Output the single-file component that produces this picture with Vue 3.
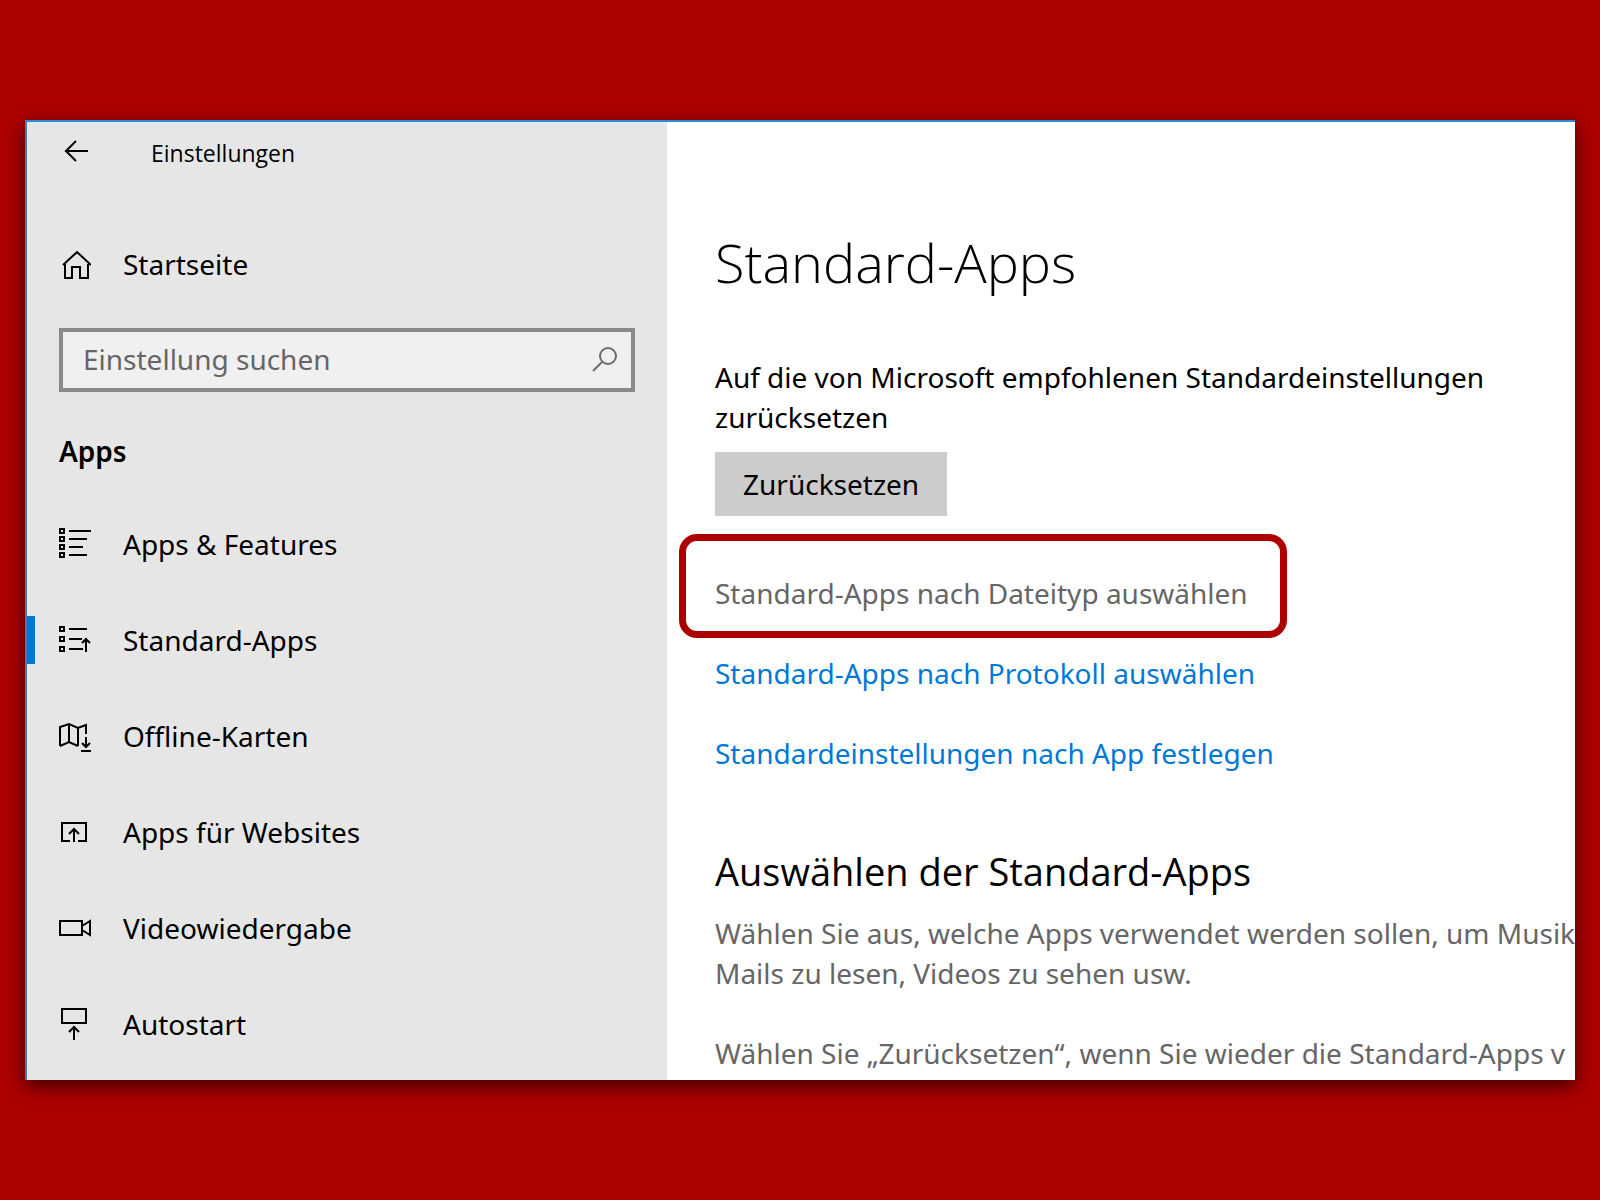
<script setup>
import { ref } from 'vue'

const query = ref('')

const navItems = [
  { id: 'features', label: 'Apps & Features' },
  { id: 'defaults', label: 'Standard-Apps', active: true },
  { id: 'maps', label: 'Offline-Karten' },
  { id: 'websites', label: 'Apps für Websites' },
  { id: 'video', label: 'Videowiedergabe' },
  { id: 'startup', label: 'Autostart' }
]

const iconPaths = {
  features: 'M1 1h4v4h-4zM1 9h4v4h-4zM1 17h4v4h-4zM1 25h4v4h-4zM10 3h22M10 11h18M10 19h14M10 27h18',
  defaults: 'M1 3h4v4h-4zM1 13h4v4h-4zM1 23h4v4h-4zM10 5h18M10 15h13M10 25h14M27 28V14M23 19l4-4 4 4',
  maps: 'M1 26V7l9-3 9 4 8-3v9M1 26l9-4 9 4M10 4v18M19 8v18M27 17v10M23 23l4 4 4-4M22 31h10',
  websites: 'M11 25H3V7h24v18h-8M15 26V13M10 18l5-5 5 5',
  video: 'M1 9h22v14H1zM23 14l8-5v14l-8-5',
  startup: 'M3 1h24v14H3zM15 32V19M10 24l5-5 5 5'
}
</script>

<template>
  <div class="backdrop">
    <div class="window">
      <aside class="sidebar">
        <header class="titlebar">
          <button class="back" type="button" aria-label="Zurück">
            <svg width="26" height="24" viewBox="0 0 26 24"><path d="M25 11H2M13 1L3 11l10 10" /></svg>
          </button>
          <span class="title">Einstellungen</span>
        </header>
        <a class="nav-link home" href="#start">
          <svg width="32" height="32" viewBox="0 0 32 32">
            <path d="M4 17L18 4l14 13M6 16v14h7V19h8v11h8V16" />
          </svg>
          <span>Startseite</span>
        </a>
        <label class="search">
          <input v-model="query" type="text" placeholder="Einstellung suchen" aria-label="Einstellung suchen" />
          <svg width="26" height="26" viewBox="0 0 26 26">
            <circle cx="16" cy="10" r="8" /><path d="M10 16L1 25" />
          </svg>
        </label>
        <h2 class="group">Apps</h2>
        <nav>
          <a
            v-for="item in navItems"
            :key="item.id"
            class="nav-link"
            :class="{ active: item.active }"
            :href="'#' + item.id"
          >
            <svg width="32" height="32" viewBox="0 0 32 32"><path :d="iconPaths[item.id]" /></svg>
            <span>{{ item.label }}</span>
          </a>
        </nav>
      </aside>

      <main class="content">
        <h1>Standard-Apps</h1>
        <p class="lead">Auf die von Microsoft empfohlenen Standardeinstellungen<br />zurücksetzen</p>
        <button class="reset" type="button">Zurücksetzen</button>
        <div class="links">
          <a class="visited" href="#dateityp">Standard-Apps nach Dateityp auswählen<i class="marker"></i></a>
          <a href="#protokoll">Standard-Apps nach Protokoll auswählen</a>
          <a href="#app">Standardeinstellungen nach App festlegen</a>
        </div>
        <h2>Auswählen der Standard-Apps</h2>
        <p class="hint">Wählen Sie aus, welche Apps verwendet werden sollen, um Musik<br />Mails zu lesen, Videos zu sehen usw.</p>
        <p class="hint">Wählen Sie „Zurücksetzen“, wenn Sie wieder die Standard-Apps v</p>
      </main>
    </div>
  </div>
</template>

<style>
body {
  margin: 0;
  background: #ad0000;
}
</style>

<style scoped>
.backdrop {
  box-sizing: border-box;
  display: flex;
  min-height: 100vh;
  padding: 120px 25px;
  background: #ad0000;
  color: #000;
  font: 28px/40px "Noto Sans", "Open Sans", sans-serif;
}
.window {
  flex: 1;
  display: grid;
  grid-template-columns: 640px minmax(0, 1fr);
  overflow: hidden;
  border-top: 2px solid #2b8bdd;
  border-left: 2px solid #4a7bb0;
  background: #fff;
  box-shadow: 0 6px 18px rgba(0, 0, 0, 0.65);
}
.sidebar {
  background: #e6e6e6;
}
svg {
  flex: none;
  fill: none;
  stroke: #000;
  stroke-width: 2;
}
.titlebar {
  display: flex;
  align-items: center;
  height: 60px;
  padding-left: 36px;
}
.back {
  display: flex;
  padding: 0;
  border: 0;
  background: none;
}
.title {
  margin-left: 62px;
  padding-top: 2px;
  font-family: "Open Sans", "Noto Sans", sans-serif;
  font-size: 23px;
}
.nav-link {
  position: relative;
  display: flex;
  align-items: center;
  gap: 32px;
  height: 96px;
  padding-left: 32px;
  color: #000;
  text-decoration: none;
}
.home {
  height: 48px;
  margin-top: 58px;
}
.active::before {
  content: "";
  position: absolute;
  left: 0;
  width: 8px;
  height: 48px;
  background: #0078d7;
}
.search {
  box-sizing: border-box;
  display: flex;
  align-items: center;
  height: 64px;
  margin: 40px 32px 0;
  padding: 0 13px 2px 20px;
  border: 4px solid #8a8a8a;
  background: #f0f0f0;
}
.search input {
  flex: 1;
  min-width: 0;
  padding: 0;
  border: 0;
  outline: 0;
  background: none;
  color: #000;
  font: inherit;
}
.search input::placeholder {
  color: #666;
  opacity: 1;
}
.search svg {
  stroke: #6b6b6b;
}
.group {
  margin: 39px 32px 25px;
  font-size: 28px;
  font-weight: 600;
}
.content {
  padding: 104px 0 7px 48px;
  white-space: nowrap;
}
.content h1,
.content h2 {
  font-family: "Open Sans", "Noto Sans", sans-serif;
}
.content h1 {
  margin: 0 0 59px;
  font-size: 54px;
  font-weight: 300;
  line-height: 72px;
}
.content p {
  margin: 0;
}
.reset {
  height: 64px;
  margin-top: 15px;
  padding: 0 28px;
  border: 0;
  background: #ccc;
  color: #000;
  font: inherit;
}
.links {
  display: flex;
  flex-direction: column;
  align-items: flex-start;
  gap: 40px;
  margin: 57px 0 74px;
}
.links a {
  position: relative;
  color: #0078d7;
  text-decoration: none;
}
.links .visited {
  color: #666;
}
.marker {
  position: absolute;
  inset: -39px -39px -25px -36px;
  border: 7px solid #ad0000;
  border-radius: 18px;
}
.content h2 {
  margin: 0 0 18px;
  font-size: 38px;
  font-weight: 400;
  line-height: 48px;
}
.hint {
  color: #666;
}
.content .hint + .hint {
  margin-top: 40px;
}
</style>
